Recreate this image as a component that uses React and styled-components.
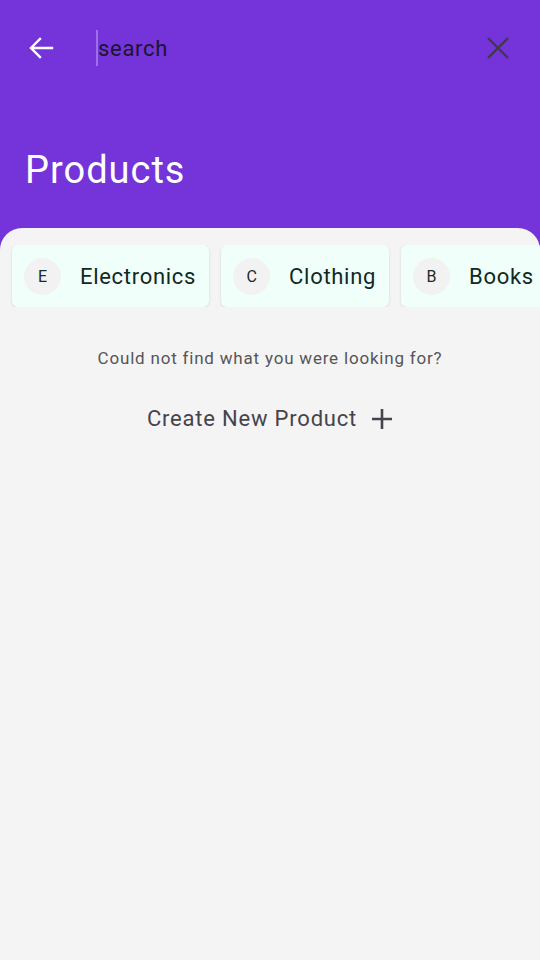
import React, { useState } from "react";
import styled, { createGlobalStyle } from "styled-components";

const GlobalStyle = createGlobalStyle`
  html, body {
    margin: 0;
    padding: 0;
    background: #7434d9;
    font-family: Roboto, "Liberation Sans", sans-serif;
  }
  * { box-sizing: border-box; }
`;

const categories = [
  { id: 1, name: "Electronics" },
  { id: 2, name: "Clothing" },
  { id: 3, name: "Books" },
];

const App = () => {
  const [query, setQuery] = useState("");

  return (
    <Page>
      <GlobalStyle />
      <Header>
        <TopBar>
          <IconBtn aria-label="back">
            <svg width="26" height="26" viewBox="0 0 26 26" fill="none">
              <path
                d="M24 13H3.5M12 4l-9 9 9 9"
                stroke="#fff"
                strokeWidth="2.4"
                strokeLinecap="square"
              />
            </svg>
          </IconBtn>
          <SearchInput
            value={query}
            placeholder="search"
            onChange={(e) => setQuery(e.target.value)}
          />
          <IconBtn aria-label="clear">
            <svg width="24" height="24" viewBox="0 0 24 24" fill="none">
              <path
                d="M2 2l20 20M22 2L2 22"
                stroke="#3f3a4a"
                strokeWidth="2.4"
              />
            </svg>
          </IconBtn>
        </TopBar>
        <Title>Products</Title>
      </Header>
      <Sheet>
        <ChipRow>
          {categories.map((c) => (
            <Chip key={c.id}>
              <Avatar>{c.name[0]}</Avatar>
              <ChipLabel>{c.name}</ChipLabel>
            </Chip>
          ))}
        </ChipRow>
        <Empty>Could not find what you were looking for?</Empty>
        <CreateBtn>
          Create New Product
          <svg width="22" height="22" viewBox="0 0 22 22" fill="none">
            <path d="M11 1v20M1 11h20" stroke="#46434c" strokeWidth="2.6" />
          </svg>
        </CreateBtn>
      </Sheet>
    </Page>
  );
};

const Page = styled.div`
  min-height: 960px;
  display: flex;
  flex-direction: column;
  background: #7434d9;
`;

const Header = styled.div`
  display: flex;
  flex-direction: column;
`;

const TopBar = styled.div`
  height: 96px;
  display: flex;
  align-items: center;
  padding: 0 18px 0 17px;
`;

const IconBtn = styled.button`
  width: 48px;
  height: 48px;
  border: none;
  background: none;
  padding: 0;
  display: flex;
  align-items: center;
  justify-content: center;
  cursor: pointer;
`;

const SearchInput = styled.input`
  flex: 1;
  margin-left: 31px;
  height: 36px;
  border: none;
  outline: none;
  background: transparent;
  border-left: 2px solid #9c70e6;
  padding: 0;
  font-family: Roboto, "Liberation Sans", sans-serif;
  font-size: 22px;
  letter-spacing: 0.7px;
  color: #1a1a2e;
  &::placeholder {
    color: #1b1530;
  }
`;

const Title = styled.h1`
  margin: 51px 0 35px 25px;
  font-size: 38px;
  line-height: 46px;
  font-weight: 400;
  letter-spacing: 1px;
  color: #fff;
`;

const Sheet = styled.div`
  flex: 1;
  background: #f4f4f4;
  border-radius: 22px 22px 0 0;
  padding-top: 17px;
  display: flex;
  flex-direction: column;
  align-items: center;
  overflow: hidden;
`;

const ChipRow = styled.div`
  align-self: stretch;
  display: flex;
  gap: 12px;
  padding-left: 12px;
  overflow: hidden;
`;

const Chip = styled.div`
  flex-shrink: 0;
  height: 62px;
  display: flex;
  align-items: center;
  gap: 19px;
  padding: 0 13px 0 12px;
  background: #f1fffa;
  border-radius: 6px;
  box-shadow: 0 1px 3px rgba(0, 0, 0, 0.12);
`;

const Avatar = styled.div`
  width: 37px;
  height: 37px;
  border-radius: 50%;
  background: #f2f2f2;
  display: flex;
  align-items: center;
  justify-content: center;
  font-size: 16px;
  color: #1d2a26;
`;

const ChipLabel = styled.span`
  font-size: 22px;
  letter-spacing: 0.7px;
  color: #0f2a22;
`;

const Empty = styled.p`
  margin: 41px 0 0;
  font-size: 17px;
  letter-spacing: 0.8px;
  color: #555459;
`;

const CreateBtn = styled.button`
  margin-top: 37px;
  border: none;
  background: none;
  display: flex;
  align-items: center;
  gap: 14px;
  font-family: Roboto, "Liberation Sans", sans-serif;
  font-size: 22px;
  letter-spacing: 0.8px;
  color: #46434c;
  cursor: pointer;
`;

export default App;
